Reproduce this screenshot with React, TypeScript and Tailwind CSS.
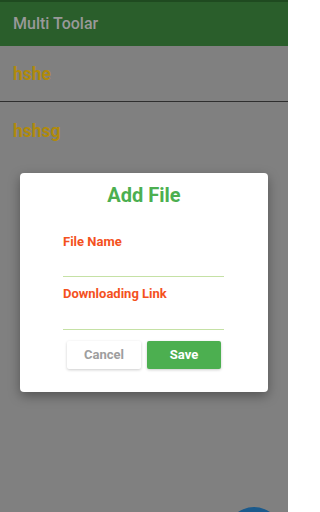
import React from "react";

export default function App() {
  return (
    <div
      className="relative w-[288px] h-[512px] overflow-hidden bg-[#808080]"
      style={{ fontFamily: "Roboto, 'Noto Sans', sans-serif" }}
    >
      <div className="h-[2px] bg-[#1f4a20]" />
      <div className="h-[44px] bg-[#2a5e2b] flex items-center px-[13px]">
        <span className="text-[16px] font-medium text-[#999999] leading-none">Multi Toolar</span>
      </div>
      <div className="h-[56px] flex items-center px-[13px] border-b border-[#2e2e2e]">
        <span className="text-[17.5px] font-bold text-[#b08a0c] leading-none pt-[3px]">hshe</span>
      </div>
      <div className="h-[56px] flex items-center px-[13px]">
        <span className="text-[17.5px] font-bold text-[#b08a0c] leading-none pt-[3px]">hshsg</span>
      </div>

      <div className="absolute left-[226px] top-[507px] w-[56px] h-[56px] rounded-full bg-[#1b5a8c]" />

      <div className="absolute left-[20px] top-[173px] w-[248px] h-[219px] bg-white rounded-[4px] shadow-[0_4px_12px_rgba(0,0,0,0.35)] flex flex-col">
        <div className="pt-[10px] text-center text-[20px] font-bold text-[#4caf50] leading-[24px]">Add File</div>
        <div className="px-[43px] pt-[27px] flex flex-col">
          <div className="text-[13px] font-bold text-[#f4511e] leading-[16px]">File Name</div>
          <div className="mt-[26px] h-[1px] bg-[#c5e1a5] w-[161px]" />
          <div className="mt-[9px] text-[13px] font-bold text-[#f4511e] leading-[16px]">Downloading Link</div>
          <div className="mt-[27px] h-[1px] bg-[#c5e1a5] w-[161px]" />
        </div>
        <div className="mt-[11px] flex gap-[6px] pl-[47px]">
          <div className="w-[74px] h-[28px] bg-white rounded-[2px] shadow-[0_1px_3px_rgba(0,0,0,0.2)] flex items-center justify-center text-[13px] font-bold text-[#9e9e9e]">
            Cancel
          </div>
          <div className="w-[74px] h-[28px] bg-[#4caf50] rounded-[2px] shadow-[0_1px_3px_rgba(0,0,0,0.2)] flex items-center justify-center text-[13px] font-bold text-white">
            Save
          </div>
        </div>
      </div>
    </div>
  );
}
